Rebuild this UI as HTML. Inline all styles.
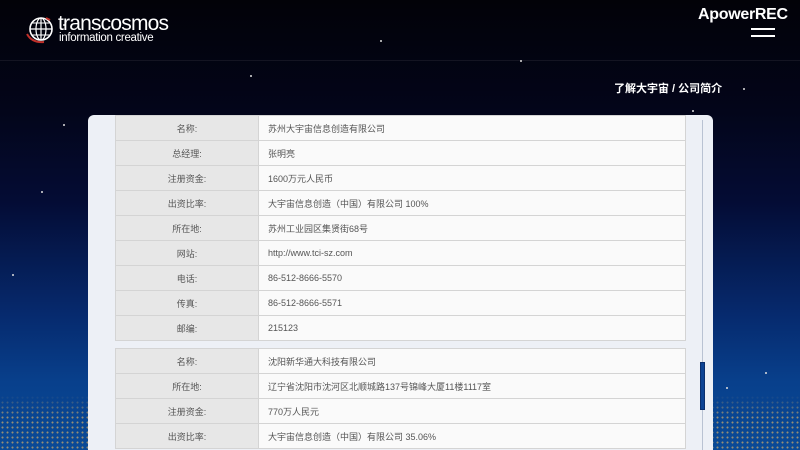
<!DOCTYPE html>
<html><head><meta charset="utf-8"><style>
*{margin:0;padding:0;box-sizing:border-box}
html,body{width:800px;height:450px;overflow:hidden}
body{position:relative;font-family:"Liberation Sans","Noto Sans CJK SC",sans-serif;
background:linear-gradient(180deg,#020208 0%,#03051a 25%,#040c35 45%,#062a6e 70%,#08408c 85%,#0a4a96 100%);}
.dots{position:absolute;left:0;right:0;top:395px;bottom:0;
background-image:radial-gradient(circle,#b8a070 0.8px,transparent 1.2px);background-size:5px 5px;opacity:.8;
-webkit-mask-image:linear-gradient(180deg,transparent,#000 40%);mask-image:linear-gradient(180deg,transparent,#000 40%)}
.star{position:absolute;width:2px;height:2px;background:#ddd;border-radius:1px}
.hline{position:absolute;left:0;right:0;top:60px;height:1px;background:rgba(255,255,255,.07)}
.logo{position:absolute;left:26px;top:15px;color:#fff}
.logo .t1{position:absolute;left:32px;top:-3px;font-size:21px;letter-spacing:-0.8px;white-space:nowrap}
.logo .t2{position:absolute;left:33px;top:17px;font-size:11.5px;white-space:nowrap;letter-spacing:-0.3px}
.apr{position:absolute;left:698px;top:6px;color:#fff;font-size:16px;font-weight:bold;letter-spacing:-0.3px}
.menu{position:absolute;left:751px;width:24px;height:2px;background:#fff}
.crumb{position:absolute;left:614px;top:80px;color:#fff;font-size:11px;font-weight:bold}
.panel{position:absolute;left:88px;top:115px;width:625px;height:340px;background:#edf0f6;border-radius:6px 6px 0 0}
table{position:absolute;left:27px;width:571px;border-collapse:collapse;font-size:9px;color:#555}
td{height:25px;border:1px solid #d4d4d4;vertical-align:middle}
td.l{width:143px;background:#e7e7e7;text-align:center}
td.v{background:#fafafa;padding-left:9px}
.track{position:absolute;left:614px;top:5px;width:1px;height:340px;background:#b9c2d2}
.thumb{position:absolute;left:612px;top:247px;width:5px;height:48px;background:#0d4394;border:1px solid #0a2f6d}
</style></head><body>
<div class="dots"></div>
<div class="hline"></div>
<div class="star" style="left:63px;top:24px"></div>
<div class="star" style="left:41px;top:191px"></div>
<div class="star" style="left:63px;top:124px"></div>
<div class="star" style="left:12px;top:274px"></div>
<div class="star" style="left:743px;top:88px"></div>
<div class="star" style="left:692px;top:110px"></div>
<div class="star" style="left:726px;top:387px"></div>
<div class="star" style="left:765px;top:372px"></div>
<div class="star" style="left:380px;top:40px"></div>
<div class="star" style="left:520px;top:60px"></div>
<div class="star" style="left:250px;top:75px"></div>
<div class="logo">
<svg width="30" height="30" viewBox="0 0 30 30" style="position:absolute;left:0;top:0">
<circle cx="15" cy="14" r="11" fill="none" stroke="#fff" stroke-width="1.6"/>
<ellipse cx="15" cy="14" rx="5" ry="11" fill="none" stroke="#fff" stroke-width="1.2"/>
<line x1="15" y1="3" x2="15" y2="25" stroke="#fff" stroke-width="1.2"/>
<line x1="4" y1="14" x2="26" y2="14" stroke="#fff" stroke-width="1.2"/>
<line x1="6" y1="8" x2="24" y2="8" stroke="#fff" stroke-width="1"/>
<line x1="6" y1="20" x2="24" y2="20" stroke="#fff" stroke-width="1"/>
<path d="M1 19 Q6 28 18 27" fill="none" stroke="#c0302a" stroke-width="2"/>
<path d="M20 3 l4 2" stroke="#c0302a" stroke-width="2"/>
</svg>
<div class="t1">transcosmos</div>
<div class="t2">information creative</div>
</div>
<div class="apr">ApowerREC</div>
<div class="menu" style="top:28px"></div>
<div class="menu" style="top:35px"></div>
<div class="crumb">了解大宇宙 / 公司简介</div>
<div class="panel">
<table style="top:0">
<tr><td class="l">名称:</td><td class="v">苏州大宇宙信息创造有限公司</td></tr>
<tr><td class="l">总经理:</td><td class="v">张明亮</td></tr>
<tr><td class="l">注册资金:</td><td class="v">1600万元人民币</td></tr>
<tr><td class="l">出资比率:</td><td class="v">大宇宙信息创造（中国）有限公司 100%</td></tr>
<tr><td class="l">所在地:</td><td class="v">苏州工业园区集贤街68号</td></tr>
<tr><td class="l">网站:</td><td class="v">http://www.tci-sz.com</td></tr>
<tr><td class="l">电话:</td><td class="v">86-512-8666-5570</td></tr>
<tr><td class="l">传真:</td><td class="v">86-512-8666-5571</td></tr>
<tr><td class="l">邮编:</td><td class="v">215123</td></tr>
</table>
<table style="top:233px">
<tr><td class="l">名称:</td><td class="v">沈阳新华通大科技有限公司</td></tr>
<tr><td class="l">所在地:</td><td class="v">辽宁省沈阳市沈河区北顺城路137号锦峰大厦11楼1117室</td></tr>
<tr><td class="l">注册资金:</td><td class="v">770万人民元</td></tr>
<tr><td class="l">出资比率:</td><td class="v">大宇宙信息创造（中国）有限公司 35.06%</td></tr>
</table>
<div class="track"></div>
<div class="thumb"></div>
</div>
</body></html>
